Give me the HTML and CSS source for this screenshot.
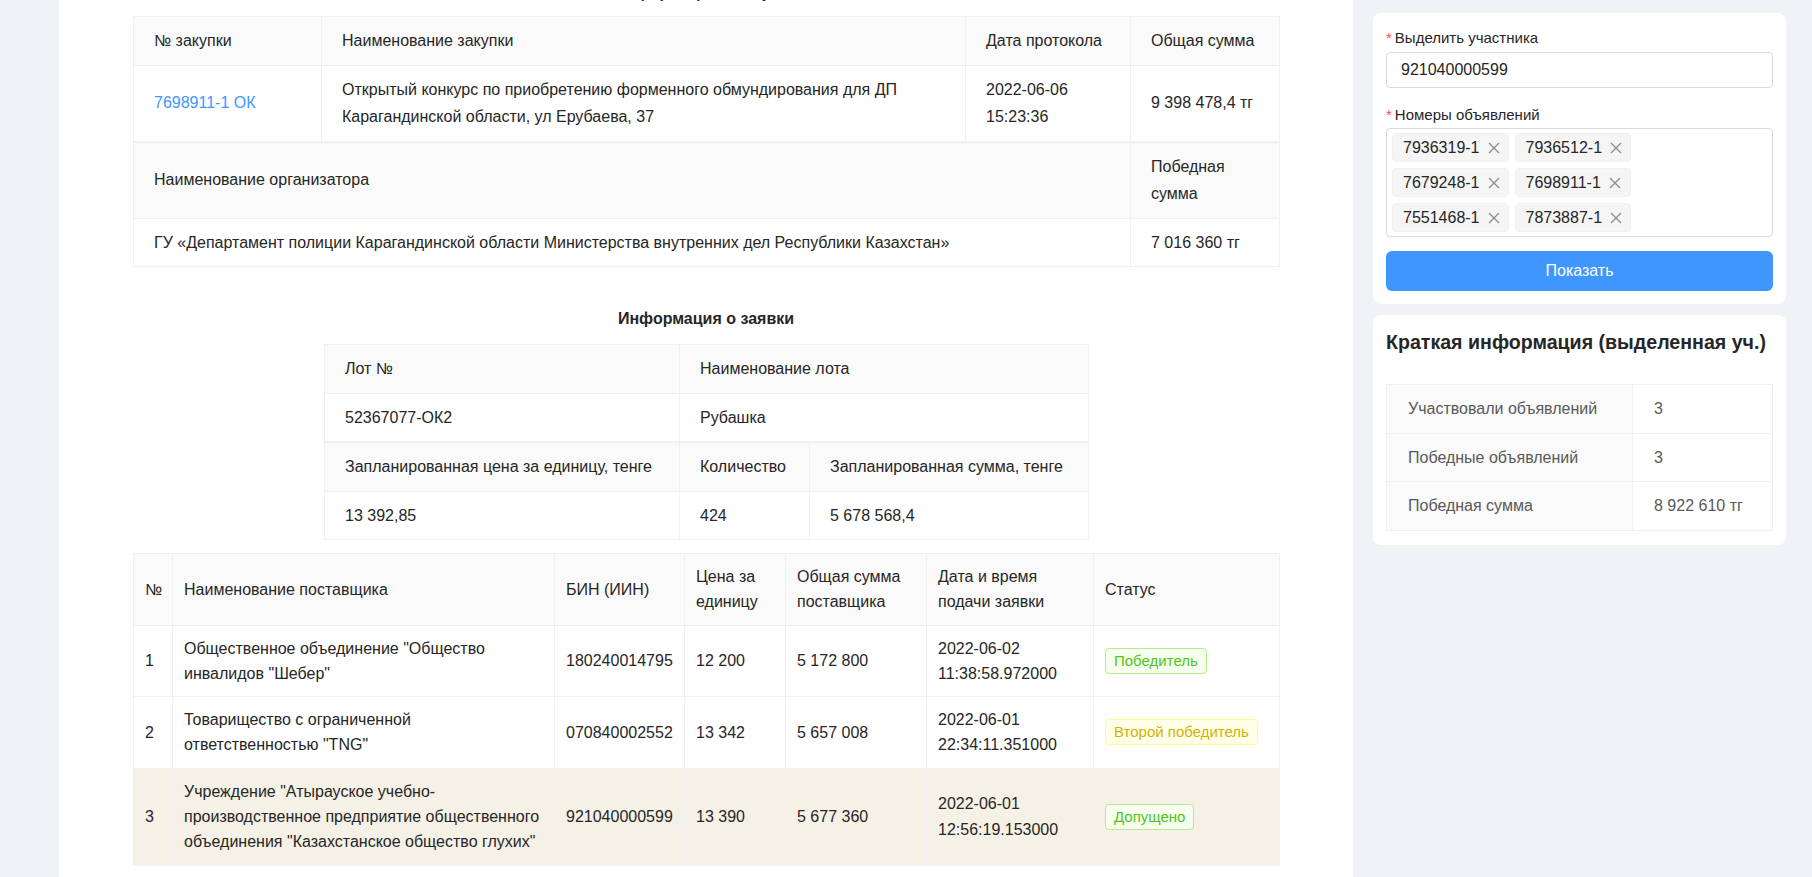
FILE: index.html
```html
<!DOCTYPE html>
<html lang="ru">
<head>
<meta charset="utf-8">
<title>Информация о закупке</title>
<link rel="stylesheet" href="styles.css">
</head>
<body>
<div class="layout">
  <aside class="rail"></aside>

  <main class="main">
    <h3 class="section-title section-title--top">Информация о закупке</h3>

    <div class="info-block">
      <table class="grid">
        <colgroup><col class="c-188"><col class="c-644"><col class="c-165"><col class="c-149"></colgroup>
        <tr>
          <th>№ закупки</th>
          <th>Наименование закупки</th>
          <th>Дата протокола</th>
          <th>Общая сумма</th>
        </tr>
        <tr>
          <td><a class="link" href="#">7698911-1 ОК</a></td>
          <td>Открытый конкурс по приобретению форменного обмундирования для ДП Карагандинской области, ул Ерубаева, 37</td>
          <td>2022-06-06 15:23:36</td>
          <td>9 398 478,4 тг</td>
        </tr>
      </table>
      <table class="grid">
        <colgroup><col class="c-997"><col class="c-149"></colgroup>
        <tr>
          <th>Наименование организатора</th>
          <th>Победная сумма</th>
        </tr>
        <tr>
          <td>ГУ «Департамент полиции Карагандинской области Министерства внутренних дел Республики Казахстан»</td>
          <td>7 016 360 тг</td>
        </tr>
      </table>
    </div>

    <h3 class="section-title section-title--mid">Информация о заявки</h3>

    <div class="info-block info-block--narrow">
      <table class="grid">
        <colgroup><col class="c-355"><col class="c-409"></colgroup>
        <tr>
          <th>Лот №</th>
          <th>Наименование лота</th>
        </tr>
        <tr>
          <td>52367077-ОК2</td>
          <td>Рубашка</td>
        </tr>
      </table>
      <table class="grid">
        <colgroup><col class="c-355"><col class="c-130"><col class="c-279"></colgroup>
        <tr>
          <th>Запланированная цена за единицу, тенге</th>
          <th>Количество</th>
          <th>Запланированная сумма, тенге</th>
        </tr>
        <tr>
          <td>13 392,85</td>
          <td>424</td>
          <td>5 678 568,4</td>
        </tr>
      </table>
    </div>

    <table class="suppliers">
      <colgroup>
        <col class="s-1"><col class="s-2"><col class="s-3"><col class="s-4"><col class="s-5"><col class="s-6"><col class="s-7">
      </colgroup>
      <tr>
        <th>№</th>
        <th>Наименование поставщика</th>
        <th>БИН (ИИН)</th>
        <th>Цена за единицу</th>
        <th>Общая сумма поставщика</th>
        <th>Дата и время подачи заявки</th>
        <th>Статус</th>
      </tr>
      <tr>
        <td>1</td>
        <td>Общественное объединение "Общество инвалидов "Шебер"</td>
        <td>180240014795</td>
        <td>12 200</td>
        <td>5 172 800</td>
        <td>2022-06-02 11:38:58.972000</td>
        <td><span class="status status--win">Победитель</span></td>
      </tr>
      <tr>
        <td>2</td>
        <td>Товарищество с ограниченной ответственностью "TNG"</td>
        <td>070840002552</td>
        <td>13 342</td>
        <td>5 657 008</td>
        <td>2022-06-01 22:34:11.351000</td>
        <td><span class="status status--second">Второй победитель</span></td>
      </tr>
      <tr class="row-own">
        <td>3</td>
        <td>Учреждение "Атырауское учебно-производственное предприятие общественного объединения "Казахстанское общество глухих"</td>
        <td>921040000599</td>
        <td>13 390</td>
        <td>5 677 360</td>
        <td>2022-06-01 12:56:19.153000</td>
        <td><span class="status status--win">Допущено</span></td>
      </tr>
    </table>
  </main>

  <div class="side">
    <form class="card card--form">
      <label class="field-label"><span class="req">*</span>Выделить участника</label>
      <div class="input">921040000599</div>

      <label class="field-label field-label--second"><span class="req">*</span>Номеры объявлений</label>
      <div class="select">
        <div class="tags">
          <span class="tag">7936319-1<svg class="tag-x" viewBox="0 0 12 12"><path d="M1 1L11 11M11 1L1 11"/></svg></span>
          <span class="tag">7936512-1<svg class="tag-x" viewBox="0 0 12 12"><path d="M1 1L11 11M11 1L1 11"/></svg></span>
          <span class="tag">7679248-1<svg class="tag-x" viewBox="0 0 12 12"><path d="M1 1L11 11M11 1L1 11"/></svg></span>
          <span class="tag">7698911-1<svg class="tag-x" viewBox="0 0 12 12"><path d="M1 1L11 11M11 1L1 11"/></svg></span>
          <span class="tag">7551468-1<svg class="tag-x" viewBox="0 0 12 12"><path d="M1 1L11 11M11 1L1 11"/></svg></span>
          <span class="tag">7873887-1<svg class="tag-x" viewBox="0 0 12 12"><path d="M1 1L11 11M11 1L1 11"/></svg></span>
        </div>
      </div>

      <button type="button" class="btn-primary">Показать</button>
    </form>

    <section class="card card--summary">
      <h2 class="summary-title">Краткая информация (выделенная уч.)</h2>
      <table class="desc">
        <tr><th>Участвовали объявлений</th><td>3</td></tr>
        <tr><th>Победные объявлений</th><td>3</td></tr>
        <tr><th>Победная сумма</th><td>8 922 610 тг</td></tr>
      </table>
    </section>
  </div>
</div>
</body>
</html>
```

FILE: styles.css
```css
html, body {
  margin: 0;
  padding: 0;
}

body {
  font-family: "Liberation Sans", Arial, sans-serif;
  color: #262626;
  background: #f0f2f5;
}

.layout {
  display: flex;
  height: 877px;
  overflow: hidden;
}

.rail {
  width: 59px;
  flex: none;
}

.main {
  width: 1294px;
  flex: none;
  box-sizing: border-box;
  padding: 0 74px;
  background: #fff;
  overflow: hidden;
}

.side {
  flex: 1;
  display: flex;
  flex-direction: column;
  gap: 11px;
  padding: 13px 26px 0 20px;
}

/* headings */
.section-title {
  margin: 0;
  text-align: center;
  font-size: 16px;
  font-weight: 700;
  line-height: 24px;
  color: #262626;
}

.section-title--top {
  margin-top: -19px;
  margin-bottom: 11px;
}

.section-title--mid {
  margin-top: 40px;
  margin-bottom: 13px;
}

/* info tables */
.info-block--narrow {
  width: 764px;
  margin: 0 auto;
}

.grid {
  width: 100%;
  border-collapse: collapse;
  table-layout: fixed;
  font-size: 16px;
  line-height: 27.5px;
}

.grid th,
.grid td {
  border: 1px solid #f0f0f0;
  padding: 10px 20px;
  text-align: left;
  font-weight: 400;
  vertical-align: middle;
}

.grid th {
  background: #fafafa;
}

.c-188 { width: 188px; }
.c-644 { width: 644px; }
.c-165 { width: 165px; }
.c-149 { width: 149px; }
.c-997 { width: 997px; }
.c-355 { width: 355px; }
.c-409 { width: 409px; }
.c-130 { width: 130px; }
.c-279 { width: 279px; }

.link {
  color: #4096ff;
  text-decoration: none;
}

/* suppliers */
.suppliers {
  width: 100%;
  margin-top: 13px;
  border-collapse: collapse;
  table-layout: fixed;
  font-size: 16px;
  line-height: 25.3px;
}

.suppliers th,
.suppliers td {
  border: 1px solid #f0f0f0;
  padding: 10px 11px;
  text-align: left;
  font-weight: 400;
  vertical-align: middle;
}

.suppliers th {
  background: #fafafa;
}

.s-1 { width: 39px; }
.s-2 { width: 382px; }
.s-3 { width: 130px; }
.s-4 { width: 101px; }
.s-5 { width: 141px; }
.s-6 { width: 167px; }
.s-7 { width: 186px; }

.row-own td {
  background: #f5f1e6;
}

.status {
  display: inline-block;
  padding: 0 8px;
  border: 1px solid;
  border-radius: 4px;
  font-size: 15px;
  line-height: 24px;
}

.status--win {
  color: #52c41a;
  background: #f6ffed;
  border-color: #b7eb8f;
}

.status--second {
  color: #d4b106;
  background: #feffe6;
  border-color: #fffb8f;
}

/* side cards */
.card {
  background: #fff;
  border-radius: 8px;
}

.card--form {
  display: flex;
  flex-direction: column;
  padding: 14px 13px 13px;
  margin: 0;
}

.field-label {
  font-size: 15px;
  line-height: 22px;
  margin-bottom: 3px;
  color: #262626;
}

.field-label--second {
  margin-top: 16px;
  margin-bottom: 2px;
}

.req {
  color: #ff4d4f;
  margin-right: 3px;
}

.input {
  height: 36px;
  box-sizing: border-box;
  border: 1px solid #d9d9d9;
  border-radius: 4px;
  padding: 0 14px;
  font-size: 16px;
  line-height: 34px;
  color: #262626;
}

.select {
  border: 1px solid #d9d9d9;
  border-radius: 4px;
  padding: 4px 5px;
}

.tags {
  display: grid;
  grid-template-columns: repeat(2, max-content);
  gap: 6px 6px;
}

.tag {
  display: inline-flex;
  align-items: center;
  height: 29px;
  box-sizing: border-box;
  padding: 0 8px 0 10px;
  border: 1px solid #f0f0f0;
  border-radius: 4px;
  background: #f5f5f5;
  font-size: 16px;
  line-height: 27px;
  color: #262626;
}

.tag-x {
  width: 12px;
  height: 12px;
  margin-left: 8px;
  fill: none;
  stroke: #8c8c8c;
  stroke-width: 1.3;
}

.btn-primary {
  margin-top: 14px;
  height: 40px;
  border: 0;
  border-radius: 6px;
  background: #4096ff;
  color: #fff;
  font-family: inherit;
  font-size: 16px;
  cursor: pointer;
}

.card--summary {
  padding: 13px 13px 14px;
}

.summary-title {
  margin: 0 0 28px;
  font-size: 19.6px;
  font-weight: 700;
  line-height: 28px;
  white-space: nowrap;
  color: #262626;
}

.desc {
  width: 100%;
  border-collapse: collapse;
  table-layout: fixed;
  font-size: 16px;
  line-height: 21.5px;
  color: #595959;
}

.desc th,
.desc td {
  border: 1px solid #f0f0f0;
  padding: 13px 21px;
  text-align: left;
  font-weight: 400;
}

.desc th {
  width: 246px;
  box-sizing: border-box;
  background: #fafafa;
}
```
